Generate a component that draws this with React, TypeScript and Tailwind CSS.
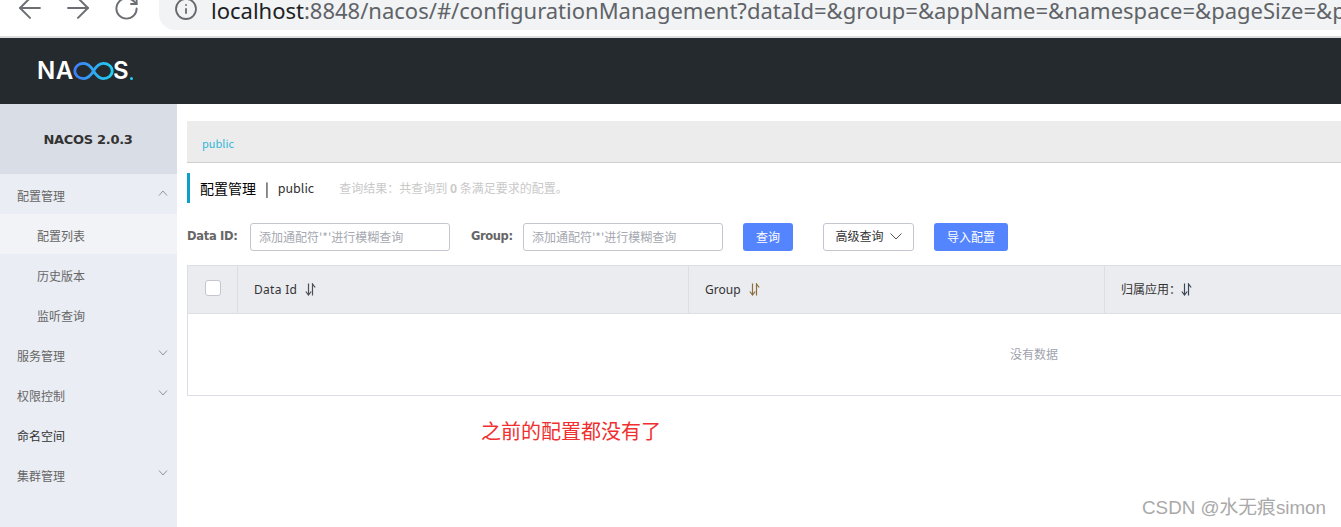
import React from "react";
import { ArrowLeft, ArrowRight, RotateCw, Info } from "lucide-react";

const CJK = "font-['Noto_Sans_CJK_SC','Noto_Sans',sans-serif]";

function Chevron({ up = false }: { up?: boolean }) {
  return (
    <svg width="10" height="6" viewBox="0 0 10 6" fill="none" stroke="#8b95a5" strokeWidth="1">
      <path d={up ? "M1 5.5 L5 1 L9 5.5" : "M1 .5 L5 5 L9 .5"} />
    </svg>
  );
}

function Sort({ color = "#4a4f57" }: { color?: string }) {
  return (
    <svg width="11" height="13" viewBox="0 0 11 13" fill="none" stroke={color} strokeWidth="1.2">
      <path d="M3.5 0.5 V12 M0.8 8.5 L3.5 12 L6.2 8.5" />
      <path d="M7.5 12.5 V1 L10.2 4.5" />
    </svg>
  );
}

function MenuItem({ label, open, up, dark }: { label: string; open?: boolean; up?: boolean; dark?: boolean }) {
  return (
    <div className={`h-10 pl-[17px] pr-[9px] flex items-center justify-between pt-[4px] text-xs ${dark ? "text-[#333]" : "text-[#666]"}`}>
      <span>{label}</span>
      {open ? (
        <span className="-mt-[7px]">
          <Chevron up={up} />
        </span>
      ) : null}
    </div>
  );
}

function SubItem({ label, active }: { label: string; active?: boolean }) {
  return (
    <div className={`h-10 pl-[37px] pt-[4px] flex items-center text-xs text-[#666] ${active ? "bg-[#f2f3f7]" : ""}`}>
      {label}
    </div>
  );
}

function Logo() {
  return (
    <div className="flex items-center h-[18px] text-white font-['Inter',sans-serif] font-semibold text-[24px] leading-none tracking-[0.6px]">
      <span>NA</span>
      <svg width="41" height="18" viewBox="0 0 41 18" fill="none" className="-ml-[1px]">
        <defs>
          <linearGradient id="nacos-loop" x1="0" y1="0" x2="1" y2="0">
            <stop offset="0" stopColor="#3f7ff5" />
            <stop offset="1" stopColor="#1fd0f0" />
          </linearGradient>
        </defs>
        <path
          d="M20.5 9 C17 3 14 1.4 10.5 1.4 C6 1.4 1.8 4.6 1.8 9 C1.8 13.4 6 16.6 10.5 16.6 C14 16.6 17 15 20.5 9 C24 3 27 1.4 30.5 1.4 C35 1.4 39.2 4.6 39.2 9 C39.2 13.4 35 16.6 30.5 16.6 C27 16.6 24 15 20.5 9 Z"
          stroke="url(#nacos-loop)"
          strokeWidth="2.8"
        />
      </svg>
      <span className="-ml-[1px]">S</span>
      <span className="ml-[1px] w-[3px] h-[3px] rounded-full bg-[#1fd0f0] self-end" />
    </div>
  );
}

export default function App() {
  return (
    <div className={`w-[1341px] h-[527px] overflow-hidden flex flex-col bg-white ${CJK}`}>
      {/* browser chrome */}
      <div className="h-[38px] shrink-0 border-b-2 border-[#dcdcdc] flex items-start bg-white overflow-hidden">
        <div className="flex items-center gap-[14px] pl-[13px] -mt-[9px] w-[159px] text-[#6b6e72]">
          <ArrowLeft size={34} strokeWidth={1.4} />
          <ArrowRight size={34} strokeWidth={1.4} />
          <span className="w-[34px] flex justify-center">
            <RotateCw size={27} strokeWidth={1.7} />
          </span>
        </div>
        <div className="flex-1 min-w-0 h-[30px] bg-[#f1f3f4] rounded-bl-[16px] flex items-start pl-[15px] overflow-hidden">
          <Info size={24} strokeWidth={1.8} className="shrink-0 text-[#666a6e] mr-[13px] -mt-[3px]" />
          <div className="whitespace-nowrap text-[22px] leading-[20px] font-['Noto_Sans',sans-serif] text-[#5f6368]">
            <span className="text-[#202124]">localhost</span>:8848/nacos/#/configurationManagement?dataId=&amp;group=&amp;appName=&amp;namespace=&amp;pageSize=&amp;p
          </div>
        </div>
      </div>

      {/* nacos header */}
      <div className="h-[66px] shrink-0 bg-[#252a2f] flex items-center pl-[37px]">
        <Logo />
      </div>

      <div className="flex-1 min-h-0 flex">
        {/* sidebar */}
        <aside className="w-[177px] shrink-0 bg-[#eaedf3]">
          <div className="h-[70px] pt-[1px] pr-[1px] bg-[#d9dde5] flex items-center justify-center font-['DejaVu_Sans',sans-serif] font-bold text-[13px] tracking-[-0.3px] text-[#333]">
            NACOS 2.0.3
          </div>
          <MenuItem label="配置管理" open up />
          <SubItem label="配置列表" active />
          <SubItem label="历史版本" />
          <SubItem label="监听查询" />
          <MenuItem label="服务管理" open />
          <MenuItem label="权限控制" open />
          <MenuItem label="命名空间" dark />
          <MenuItem label="集群管理" open />
        </aside>

        {/* main */}
        <main className="flex-1 min-w-0 pl-[10px] pt-[17px] overflow-hidden">
          <div className="h-[42px] bg-[#ececec] border-b border-[#cfcfcf] flex items-center pl-[15px] pt-[3px] text-[11px] text-[#33b5d9]">
            public
          </div>

          <div className="mt-[10px] h-[30px] border-l-[3px] border-[#0b9fc9] pl-[10px] flex items-center whitespace-nowrap">
            <span className="text-sm text-black">配置管理</span>
            <span className="text-sm text-black ml-[9px] mr-[9px]">|</span>
            <span className="text-[12.5px] text-[#333]">public</span>
            <span className="ml-[25px] text-xs text-[#c9c9c9]">
              查询结果：共查询到 <b className="font-bold">0</b> 条满足要求的配置。
            </span>
          </div>

          <div className="mt-[20px] h-[28px] flex items-center text-xs whitespace-nowrap">
            <span className="w-[63px] font-['DejaVu_Sans',sans-serif] font-bold text-[11.5px] tracking-[-0.3px] text-[#666]">Data ID:</span>
            <div className="w-[200px] h-[28px] border border-[#c4c6cf] rounded-[3px] flex items-center pl-[8px] text-[#a5a8b0]">
              添加通配符'*'进行模糊查询
            </div>
            <span className="ml-[21px] w-[52px] font-['DejaVu_Sans',sans-serif] font-bold text-[11.5px] tracking-[-0.4px] text-[#666]">Group:</span>
            <div className="w-[200px] h-[28px] border border-[#c4c6cf] rounded-[3px] flex items-center pl-[8px] text-[#a5a8b0]">
              添加通配符'*'进行模糊查询
            </div>
            <div className="ml-[20px] w-[50px] h-[28px] rounded-[3px] bg-[#5584ff] text-white flex items-center justify-center">查询</div>
            <div className="ml-[30px] w-[91px] h-[28px] pb-[2px] rounded-[3px] border border-[#c4c6cf] text-[#333] flex items-center justify-center gap-[6px]">
              高级查询
              <svg width="12" height="7" viewBox="0 0 12 7" fill="none" stroke="#555" strokeWidth="1">
                <path d="M.5 .5 L6 6 L11.5 .5" />
              </svg>
            </div>
            <div className="ml-[20px] w-[74px] h-[28px] rounded-[3px] bg-[#5584ff] text-white flex items-center justify-center">导入配置</div>
          </div>

          <div className="mt-[14px] w-[1694px] h-[131px] border border-[#dcdee3] flex flex-col">
            <div className="h-[48px] shrink-0 bg-[#ebecf0] border-b border-[#dcdee3] flex text-xs text-[#333]">
              <div className="w-[50px] border-r border-[#dcdee3] flex items-center justify-center pb-[4px]">
                <div className="w-4 h-4 bg-white border border-[#c4c6cf] rounded-[3px]" />
              </div>
              <div className="w-[451px] border-r border-[#dcdee3] pl-[16px] flex items-center gap-[8px] font-['Noto_Sans',sans-serif] text-xs tracking-[0.3px]">
                Data Id <Sort />
              </div>
              <div className="w-[416px] border-r border-[#dcdee3] pl-[16px] flex items-center gap-[8px] font-['Noto_Sans',sans-serif] text-xs">
                Group <Sort color="#8a6f3c" />
              </div>
              <div className="flex-1 pl-[16px] flex items-center pb-[1px]">
                归属应用： <Sort color="#3c4658" />
              </div>
            </div>
            <div className="flex-1 flex items-center justify-center pb-[2px] text-xs text-[#a0a2ad]">没有数据</div>
          </div>

          <div className="mt-[21px] pl-[294px] text-[20px] leading-[28px] text-[#f03030]">之前的配置都没有了</div>

          <div className="mt-[51px] flex justify-end pr-[15px] text-[18.8px] leading-[24px] text-[#a9a9a9] font-['Liberation_Sans','Noto_Sans_CJK_SC',sans-serif]">
            CSDN @水无痕simon
          </div>
        </main>
      </div>
    </div>
  );
}
